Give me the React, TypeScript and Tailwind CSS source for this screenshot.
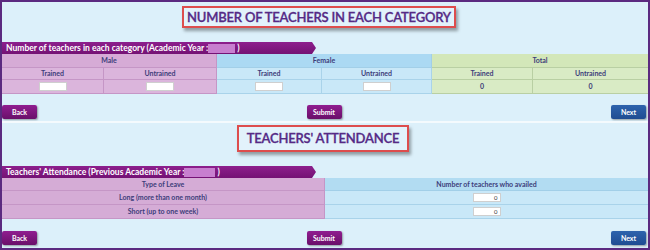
import React from 'react';

const cellText = 'text-[#3d3d7a] font-bold text-[7px] leading-none';

type BtnProps = { label: string; blue?: boolean };
const Btn = ({ label, blue }: BtnProps) => (
  <button
    type="button"
    className={
      'h-[14px] w-[35px] rounded-[2px] text-[7px] font-bold leading-none text-white shadow-[1px_1px_2px_rgba(0,0,0,0.35)] ' +
      (blue ? 'bg-gradient-to-b from-[#2d63ad] to-[#1f4c92]' : 'bg-gradient-to-b from-[#901d90] to-[#6a0f6a]')
    }
  >
    {label}
  </button>
);

const Title = ({ text, cls }: { text: string; cls: string }) => (
  <div
    className={
      'flex items-center justify-center border-2 border-[#dd4d4d] bg-[#e2f2fb] shadow-[2px_3px_3px_rgba(0,0,0,0.35)] ' + cls
    }
  >
    <span className="whitespace-nowrap text-[13px] font-semibold leading-none tracking-[-0.2px] text-[#552a86] [-webkit-text-stroke:0.3px_#552a86]">
      {text}
    </span>
  </div>
);

const Bar = ({ text, w, maskCls }: { text: string; w: string; maskCls: string }) => (
  <div
    className={
      'flex h-[12px] items-center bg-gradient-to-b from-[#8d1f8d] to-[#741274] pl-[4px] [clip-path:polygon(0_0,calc(100%-4px)_0,100%_50%,calc(100%-4px)_100%,0_100%)] ' +
      w
    }
  >
    <span className="whitespace-nowrap text-[8.5px] font-bold leading-none text-white">{text}</span>
    <span className={'h-[9px] bg-[#c77fcf] ' + maskCls} />
    <span className="ml-[2px] text-[8.5px] font-bold leading-none text-white">)</span>
  </div>
);

const Input = ({ value }: { value?: string }) => (
  <div className="flex h-[9px] w-[28px] items-center justify-end border border-[#cfcfcf] bg-white pr-[2px] text-[6px] leading-none text-[#333]">
    {value}
  </div>
);

export default function App() {
  const cols = ['Trained', 'Untrained', 'Trained', 'Untrained', 'Trained', 'Untrained'];
  const sub = [
    'bg-[#dbb5dc] border-[#c596c6]',
    'bg-[#dbb5dc] border-[#c596c6]',
    'bg-[#c9e8f8] border-[#a9d3ea]',
    'bg-[#c9e8f8] border-[#a9d3ea]',
    'bg-[#d9ebc5] border-[#b9cfa3]',
    'bg-[#d9ebc5] border-[#b9cfa3]',
  ];
  return (
    <div
      className="flex h-[250px] w-[650px] flex-col border-2 border-[#5b2a80] bg-[#dcf0fa]"
      style={{ fontFamily: 'Lato, "Open Sans", sans-serif' }}
    >
      {/* section 1 */}
      <div className="flex h-[119px] flex-col">
        <div className="flex justify-center pr-[12px] pt-[4px]">
          <Title text="NUMBER OF TEACHERS IN EACH CATEGORY" cls="h-[22px] w-[274px]" />
        </div>
        <div className="mt-[14px]">
          <Bar text="Number of teachers in each category (Academic Year : " w="w-[314px]" maskCls="w-[27px]" />
        </div>
        <div className="grid grid-cols-[102px_113px_105px_110px_101px_115px]">
          <div className={'col-span-2 flex h-[14px] items-center justify-center border-r border-b border-[#c596c6] bg-[#d6abd6] ' + cellText}>
            Male
          </div>
          <div className={'col-span-2 flex h-[14px] items-center justify-center border-r border-b border-[#a2cfe8] bg-[#abd9f3] ' + cellText}>
            Female
          </div>
          <div className={'col-span-2 flex h-[14px] items-center justify-center border-b border-[#b9cfa3] bg-[#d3e7b9] ' + cellText}>
            Total
          </div>
          {cols.map((c, i) => (
            <div
              key={'h' + i}
              className={'flex h-[12px] items-center justify-center border-b ' + (i < 5 ? 'border-r ' : '') + sub[i] + ' ' + cellText}
            >
              {c}
            </div>
          ))}
          {cols.map((c, i) => (
            <div
              key={'v' + i}
              className={'flex h-[14px] items-center justify-center border-b ' + (i < 5 ? 'border-r ' : '') + sub[i] + ' ' + cellText}
            >
              {i < 4 ? <Input /> : '0'}
            </div>
          ))}
        </div>
        <div className="mt-[11px] flex items-center justify-between pr-[2px]">
          <Btn label="Back" />
          <Btn label="Submit" />
          <Btn label="Next" blue />
        </div>
      </div>
      <div className="h-[2px] bg-[#f4fafd]" />
      {/* section 2 */}
      <div className="flex flex-1 flex-col">
        <div className="flex justify-center pr-[4px] pt-[2px]">
          <Title text="TEACHERS' ATTENDANCE" cls="h-[27px] w-[172px]" />
        </div>
        <div className="mt-[14px]">
          <Bar text="Teachers' Attendance (Previous Academic Year : " w="w-[314px]" maskCls="w-[31px]" />
        </div>
        <div className="grid grid-cols-2">
          <div className={'flex h-[13px] items-center justify-center border-r border-b border-[#c596c6] bg-[#d5acd6] ' + cellText}>
            Type of Leave
          </div>
          <div className={'flex h-[13px] items-center justify-center border-b border-[#a2cfe8] bg-[#b2dcf2] ' + cellText}>
            Number of teachers who availed
          </div>
          <div className={'flex h-[14px] items-center justify-center border-r border-b border-[#c596c6] bg-[#d5acd6] ' + cellText}>
            Long (more than one month)
          </div>
          <div className="flex h-[14px] items-center justify-center border-b border-[#a9d3ea] bg-[#c9e8f8]">
            <Input value="0" />
          </div>
          <div className={'flex h-[14px] items-center justify-center border-r border-b border-[#c596c6] bg-[#d5acd6] ' + cellText}>
            Short (up to one week)
          </div>
          <div className="flex h-[14px] items-center justify-center border-b border-[#a9d3ea] bg-[#c9e8f8]">
            <Input value="0" />
          </div>
        </div>
        <div className="mt-[12px] flex items-center justify-between pr-[2px]">
          <Btn label="Back" />
          <Btn label="Submit" />
          <Btn label="Next" blue />
        </div>
      </div>
    </div>
  );
}
